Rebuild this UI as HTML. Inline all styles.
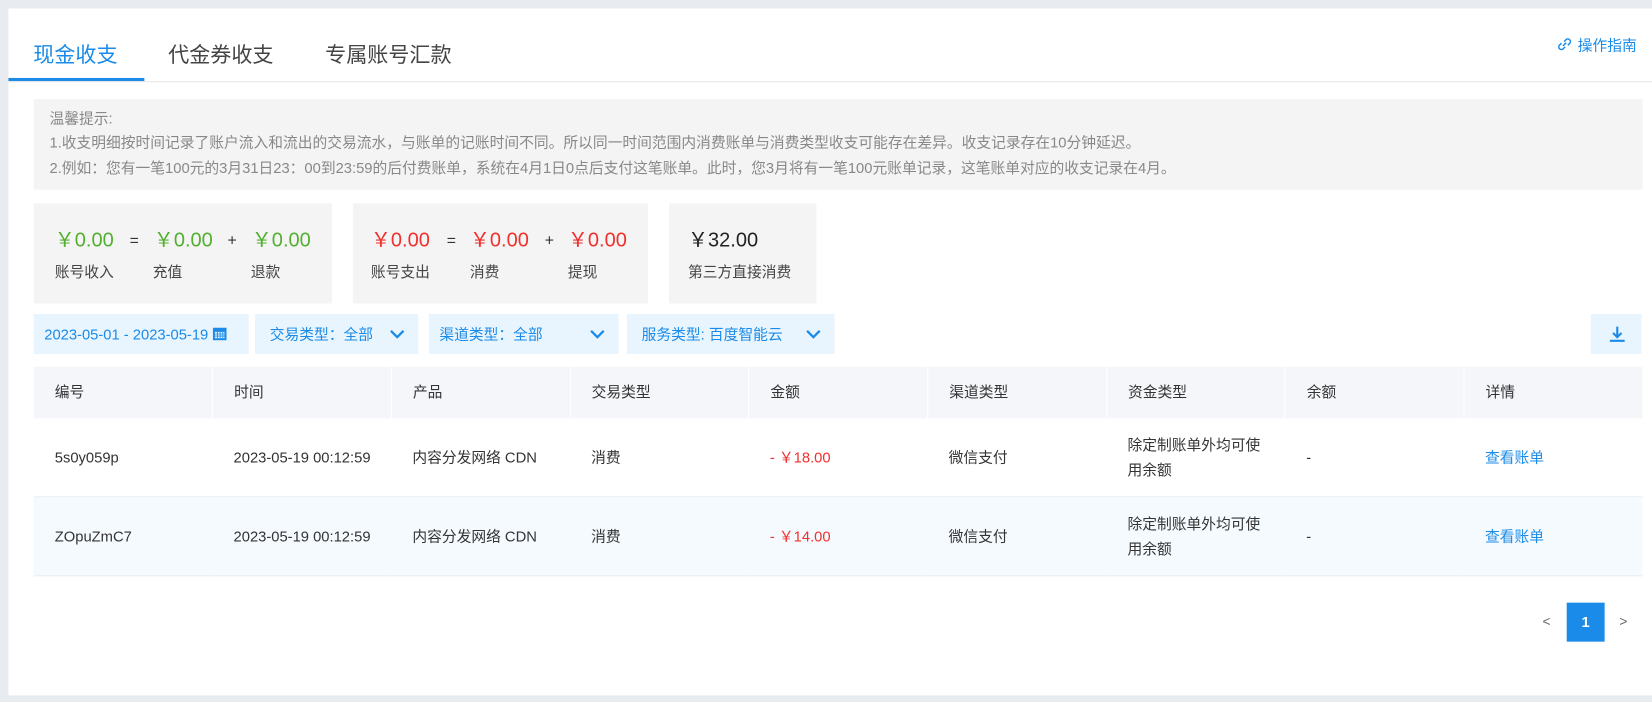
<!DOCTYPE html>
<html><head><meta charset="utf-8"><style>
*{box-sizing:border-box;margin:0;padding:0}
body{width:1652px;height:702px;background:#e8ebef;font-family:"Liberation Sans","Noto Sans CJK SC",sans-serif;position:relative;overflow:hidden;color:#333}
.wrap{position:absolute;left:0;top:0;width:1568px;height:666px;transform:scale(1.0536);transform-origin:0 0}
.card{position:absolute;left:7.6px;top:7.6px;width:1600px;height:652px;background:#fff}
.abs{position:absolute}
.tab{position:absolute;top:28px;font-size:20px;color:#444}
.tip{position:absolute;left:24.4px;top:86.4px;width:1527px;height:86px;background:#f4f4f4;color:#888;font-size:14px;line-height:23.5px;padding:7px 0 0 15px}
.box{position:absolute;top:185.4px;height:95px;background:#f4f4f4}
.num{position:absolute;top:20px;font-size:19px}
.op{position:absolute;top:28px;font-size:15px;line-height:15px}
.lbl{position:absolute;top:55px;font-size:14px;color:#444}
.g{color:#52b030}.r{color:#f0302d}
.flt{position:absolute;top:290.4px;height:38px;background:#e8f4fe;color:#1a8be8;font-size:14px;line-height:38px;padding-left:10px}
.chev{position:absolute;top:15px;width:14px;height:9px}
table{position:absolute;left:24.4px;top:340.4px;border-collapse:collapse;font-size:14px;color:#333}
td,th{width:169.7px;text-align:left;font-weight:normal;padding-left:20px}
th{height:49px;background:#f4f6fa;border-left:1px solid #fff}
th:first-child{border-left:none}
td{height:75px;border-bottom:1px solid #e8eef6;line-height:24px}
tr.alt td{background:#f5faff}
.lnk{color:#1a8be8}
</style></head><body>
<div class="wrap">
<div class="card">
<div class="tab" style="left:24px;color:#1a8be8">现金收支</div>
<div class="tab" style="left:152px">代金券收支</div>
<div class="tab" style="left:301px">专属账号汇款</div>
<div class="abs" style="left:0;top:66px;width:129px;height:3px;background:#1a8be8"></div>
<div class="abs" style="left:0;top:69px;width:1647px;height:1px;background:#e6e6e6"></div>
<div class="abs" style="left:1468px;top:25px;font-size:14px;color:#1a8be8">
<svg width="18" height="18" viewBox="0 0 18 18" style="vertical-align:-3px" fill="none" stroke="#1a8be8" stroke-width="1.4"><path d="M7.5 10.5l3-3M6 8l-2 2a2.5 2.5 0 0 0 3.5 3.5l2-2M12 10l2-2a2.5 2.5 0 0 0-3.5-3.5l-2 2"/></svg> 操作指南</div>
<div class="tip">温馨提示:<br>1.收支明细按时间记录了账户流入和流出的交易流水，与账单的记账时间不同。所以同一时间范围内消费账单与消费类型收支可能存在差异。收支记录存在10分钟延迟。<br>2.例如：您有一笔100元的3月31日23：00到23:59的后付费账单，系统在4月1日0点后支付这笔账单。此时，您3月将有一笔100元账单记录，这笔账单对应的收支记录在4月。</div>

<div class="box" style="left:24.4px;width:283px">
<div class="num g" style="left:20px">￥0.00</div><div class="op" style="left:91px">=</div>
<div class="num g" style="left:114px">￥0.00</div><div class="op" style="left:184px">+</div>
<div class="num g" style="left:207px">￥0.00</div>
<div class="lbl" style="left:20px">账号收入</div><div class="lbl" style="left:113px">充值</div><div class="lbl" style="left:206px">退款</div>
</div>
<div class="box" style="left:327.4px;width:280px">
<div class="num r" style="left:17px">￥0.00</div><div class="op" style="left:89px">=</div>
<div class="num r" style="left:111px">￥0.00</div><div class="op" style="left:182px">+</div>
<div class="num r" style="left:204px">￥0.00</div>
<div class="lbl" style="left:17px">账号支出</div><div class="lbl" style="left:111px">消费</div><div class="lbl" style="left:204px">提现</div>
</div>
<div class="box" style="left:627.4px;width:140px">
<div class="num" style="left:18px;color:#222">￥32.00</div>
<div class="lbl" style="left:18px">第三方直接消费</div>
</div>

<div class="flt" style="left:24.4px;width:204px">2023-05-01 - 2023-05-19 <svg width="13" height="12" viewBox="0 0 13 12" style="vertical-align:-1px"><rect x="0" y="0" width="13" height="12" fill="#1a8be8"/><rect x="2" y="4" width="9" height="6" fill="#e8f4fe"/><path d="M2 6h9M2 8h9M4.5 4v6M7 4v6M9.5 4v6" stroke="#1a8be8" stroke-width="0.8"/></svg></div>
<div class="flt" style="left:234.4px;width:155px;padding-left:14px">交易类型：全部<svg class="chev" style="left:128px" viewBox="0 0 14 9"><path d="M1 1l6 6 6-6" fill="none" stroke="#1a8be8" stroke-width="2.2"/></svg></div>
<div class="flt" style="left:399.4px;width:180px;padding-left:10px">渠道类型：全部<svg class="chev" style="left:153px" viewBox="0 0 14 9"><path d="M1 1l6 6 6-6" fill="none" stroke="#1a8be8" stroke-width="2.2"/></svg></div>
<div class="flt" style="left:587.4px;width:197px;padding-left:14px">服务类型: 百度智能云<svg class="chev" style="left:170px" viewBox="0 0 14 9"><path d="M1 1l6 6 6-6" fill="none" stroke="#1a8be8" stroke-width="2.2"/></svg></div>
<div class="flt" style="left:1502.4px;width:48px;padding:0"><svg class="abs" style="left:17px;top:11px" width="16" height="16" viewBox="0 0 16 16"><path d="M8 1v10M4 7l4 4 4-4M1 14.5h14" fill="none" stroke="#1a8be8" stroke-width="2"/></svg></div>

<table>
<tr><th>编号</th><th>时间</th><th>产品</th><th>交易类型</th><th>金额</th><th>渠道类型</th><th>资金类型</th><th>余额</th><th>详情</th></tr>
<tr><td>5s0y059p</td><td>2023-05-19 00:12:59</td><td>内容分发网络 CDN</td><td>消费</td><td class="r">- ￥18.00</td><td>微信支付</td><td style="padding-right:15px">除定制账单外均可使用余额</td><td>-</td><td class="lnk">查看账单</td></tr>
<tr class="alt"><td>ZOpuZmC7</td><td>2023-05-19 00:12:59</td><td>内容分发网络 CDN</td><td>消费</td><td class="r">- ￥14.00</td><td>微信支付</td><td style="padding-right:15px">除定制账单外均可使用余额</td><td>-</td><td class="lnk">查看账单</td></tr>
</table>

<div class="abs" style="left:1456.4px;top:574px;font-size:13px;color:#666">&lt;</div>
<div class="abs" style="left:1479.4px;top:564.4px;width:36px;height:37px;background:#1a8be8;color:#fff;font-size:14px;font-weight:bold;text-align:center;line-height:37px">1</div>
<div class="abs" style="left:1529.4px;top:574px;font-size:13px;color:#666">&gt;</div>
</div>
</div>
</body></html>
